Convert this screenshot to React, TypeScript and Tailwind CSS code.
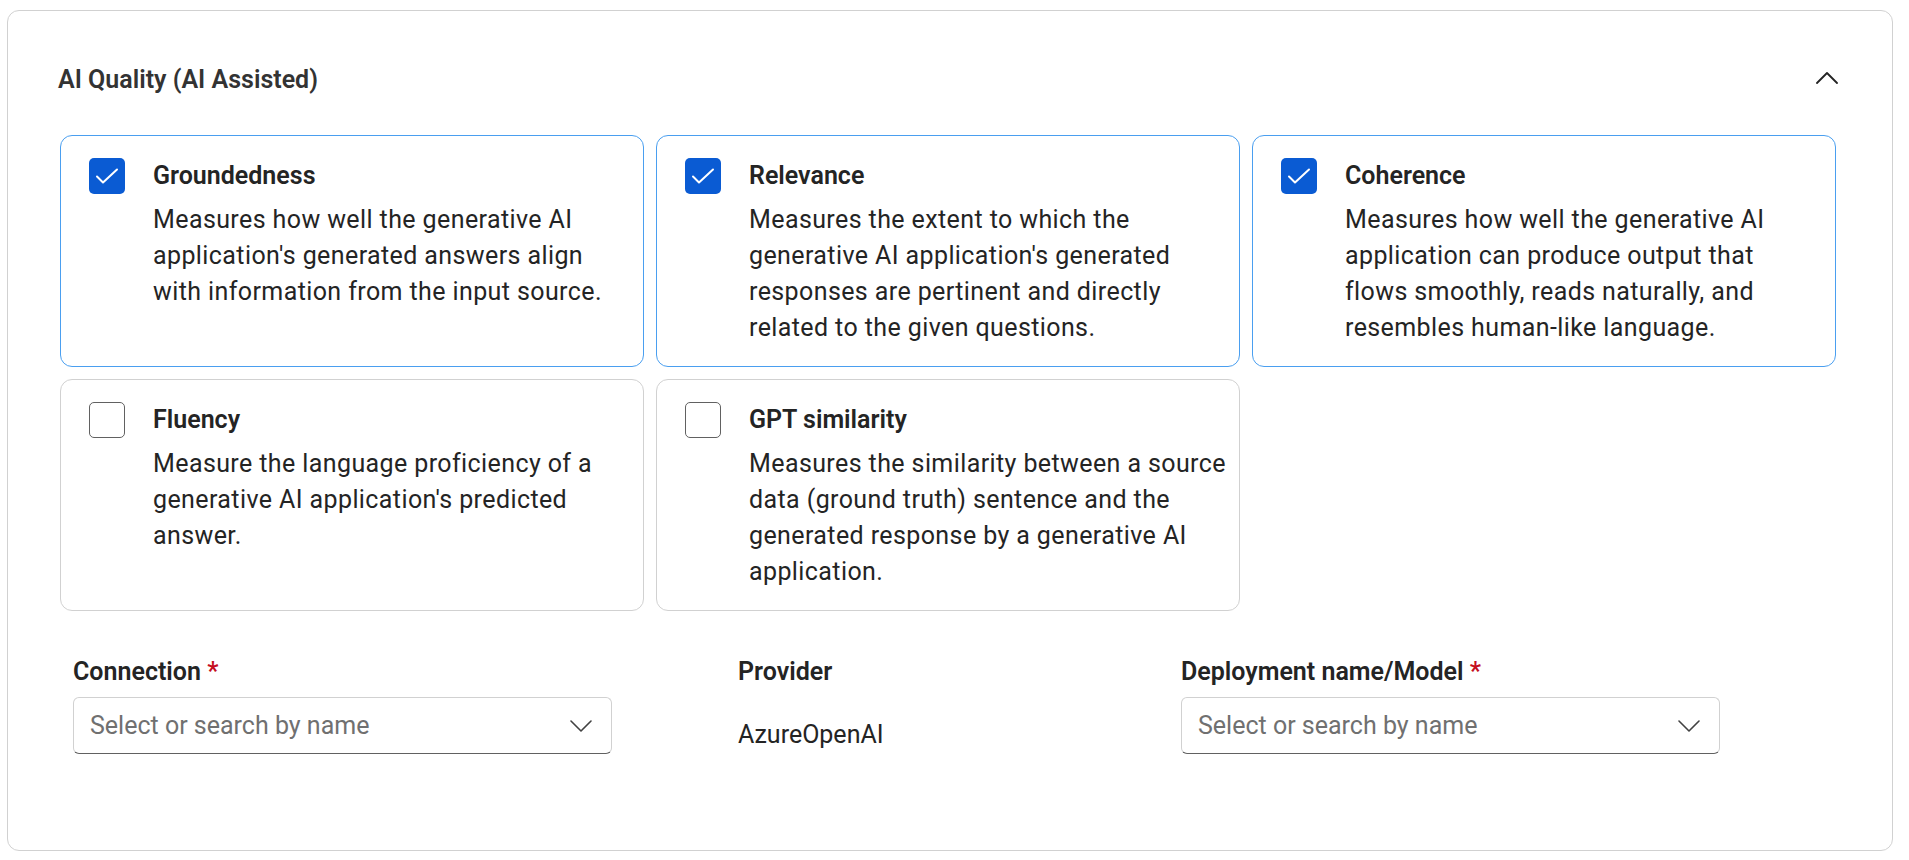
import React, { useState } from 'react';

type Metric = {
  name: string;
  lines: string[];
  checked: boolean;
};

// descriptions are kept as the lines shown in the panel
const initialMetrics: Metric[] = [
  {
    name: 'Groundedness',
    lines: ['Measures how well the generative AI', "application's generated answers align", 'with information from the input source.'],
    checked: true,
  },
  {
    name: 'Relevance',
    lines: [
      'Measures the extent to which the',
      "generative AI application's generated",
      'responses are pertinent and directly',
      'related to the given questions.',
    ],
    checked: true,
  },
  {
    name: 'Coherence',
    lines: [
      'Measures how well the generative AI',
      'application can produce output that',
      'flows smoothly, reads naturally, and',
      'resembles human-like language.',
    ],
    checked: true,
  },
  {
    name: 'Fluency',
    lines: ['Measure the language proficiency of a', "generative AI application's predicted", 'answer.'],
    checked: false,
  },
  {
    name: 'GPT similarity',
    lines: [
      'Measures the similarity between a source',
      'data (ground truth) sentence and the',
      'generated response by a generative AI',
      'application.',
    ],
    checked: false,
  },
];

function Checkbox({ checked }: { checked: boolean }) {
  return checked ? (
    <div className="w-9 h-9 shrink-0 rounded-[5px] bg-[#0a5bd3] flex items-center justify-center">
      <svg width="36" height="36" viewBox="0 0 36 36" fill="none">
        <path d="M8 18.5 L14 24.5 L28 11.5" stroke="white" strokeWidth="2" strokeLinecap="round" strokeLinejoin="round" />
      </svg>
    </div>
  ) : (
    <div className="w-9 h-9 shrink-0 rounded-[5px] border-[1.5px] border-[#616161] bg-white" />
  );
}

function ChevronDown() {
  return (
    <svg width="22" height="12" viewBox="0 0 22 12" fill="none">
      <path d="M1 1 L11 11 L21 1" stroke="#424242" strokeWidth="1.6" strokeLinecap="round" strokeLinejoin="round" />
    </svg>
  );
}

function Dropdown() {
  return (
    <div className="h-[57px] w-[539px] rounded-md border border-[#d1d1d1] border-b-[#616161] bg-white flex items-center justify-between pl-4 pr-[19px]">
      <span className="text-[#707070] tracking-normal">Select or search by name</span>
      <ChevronDown />
    </div>
  );
}

function App() {
  const [metrics, setMetrics] = useState<Metric[]>(initialMetrics);

  const toggle = (i: number) => {
    setMetrics(metrics.map((m, idx) => (idx === i ? { ...m, checked: !m.checked } : m)));
  };

  return (
    <div
      className="min-h-screen bg-white pt-[10px] text-[25px] leading-9 tracking-[0.4px] text-[#242424]"
      style={{ fontFamily: '"Segoe UI", Roboto, "Noto Sans", sans-serif' }}
    >
      <div className="ml-[7px] w-[1886px] h-[841px] rounded-xl border border-[#d1d1d1] pl-[52px] pr-[56px] pt-[51px]">
        {/* Header */}
        <div className="-mx-[2px] flex items-center justify-between">
          <h2 className="font-semibold tracking-normal text-[#333333]">AI Quality (AI Assisted)</h2>
          <svg width="22" height="12" viewBox="0 0 22 12" fill="none" className="-mt-[4px]">
            <path d="M1 11 L11 1 L21 11" stroke="#242424" strokeWidth="1.8" strokeLinecap="round" strokeLinejoin="round" />
          </svg>
        </div>

        {/* Metric cards */}
        <div className="mt-[37px] grid grid-cols-3 gap-3">
          {metrics.map((m, i) => (
            <div
              key={m.name}
              onClick={() => toggle(i)}
              className={`flex gap-7 rounded-xl border bg-white pl-7 pr-4 pt-[22px] pb-5 cursor-pointer ${
                m.checked ? 'border-[#4a9ff0]' : 'border-[#d1d1d1]'
              }`}
            >
              <Checkbox checked={m.checked} />
              <div className="min-w-0">
                <div className="font-semibold tracking-normal">{m.name}</div>
                <p className="mt-2">
                  {m.lines.map((line) => (
                    <span key={line} className="block whitespace-nowrap">
                      {line}
                    </span>
                  ))}
                </p>
              </div>
            </div>
          ))}
        </div>

        {/* Connection fields */}
        <div className="mt-[43px] pl-[13px] flex">
          <div className="w-[539px]">
            <div className="font-semibold tracking-normal">
              Connection <span className="text-[#c50f1f]">*</span>
            </div>
            <div className="mt-[7px]">
              <Dropdown />
            </div>
          </div>
          <div className="ml-[126px] w-[443px]">
            <div className="font-semibold tracking-normal">Provider</div>
            <div className="mt-[27px] tracking-normal">AzureOpenAI</div>
          </div>
          <div className="w-[539px]">
            <div className="font-semibold tracking-normal">
              Deployment name/Model <span className="text-[#c50f1f]">*</span>
            </div>
            <div className="mt-[7px]">
              <Dropdown />
            </div>
          </div>
        </div>
      </div>
    </div>
  );
}

export default App;
